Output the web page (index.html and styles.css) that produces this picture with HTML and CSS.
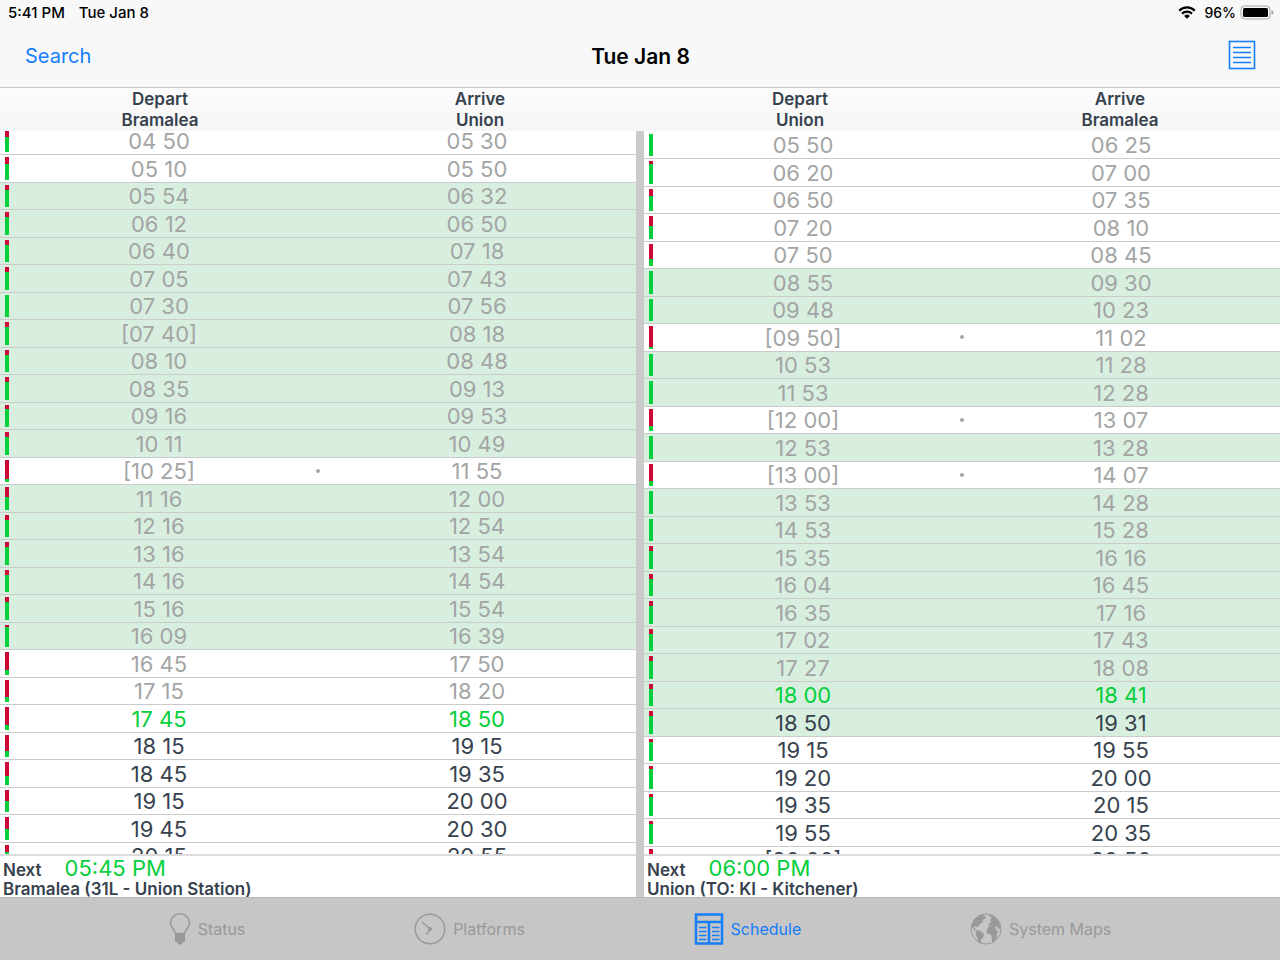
FILE: index.html
```html
<!DOCTYPE html>
<html lang="en">

<head>
  <meta charset="UTF-8">
  <meta name="viewport" content="width=device-width, initial-scale=1.0">
  <title>Schedule</title>
  <link rel="stylesheet" href="styles.css">
</head>

<body>
  <div class="statusBar">
    <span>5:41 PM</span>
    <span>Tue Jan 8</span>
    <div class="statusRight">
      <svg class="wifi" width="18" height="13" viewBox="0 0 18 13">
        <path d="M1.2 4.7a11 11 0 0 1 15.6 0" />
        <path d="M4 7.6a7.1 7.1 0 0 1 10 0" />
        <path class="wifiDot" d="M9 12.8L6.1 9.9a4.1 4.1 0 0 1 5.8 0z" />
      </svg>
      <span class="percent">96%</span>
      <svg class="battery" width="34" height="15" viewBox="0 0 34 15">
        <rect class="batteryCase" x="1" y="1" width="29" height="13" rx="3.5" />
        <rect x="3" y="3" width="25" height="9" rx="1.5" />
        <path class="batteryTip" d="M31.5 5q2 .8 2 2.5t-2 2.5z" />
      </svg>
    </div>
  </div>

  <div class="navBar">
    <a class="searchLink" href="#">Search</a>
    <h1 class="navTitle">Tue Jan 8</h1>
    <button class="listButton" aria-label="List">
      <svg width="28" height="30" viewBox="0 0 28 30">
        <rect x="1.5" y="1.5" width="25" height="27" />
        <path d="M5 7.5h18M5 12.5h18M5 17.5h18M5 22.5h18" />
      </svg>
    </button>
  </div>

  <div class="headings">
    <div>Depart<br>Bramalea</div>
    <div>Arrive<br>Union</div>
    <div>Depart<br>Union</div>
    <div>Arrive<br>Bramalea</div>
  </div>

  <div class="panes">
    <div class="pane">
      <div class="trips scrolled">
        <table aria-label="Bramalea to Union">
          <tbody id="toUnion"></tbody>
        </table>
      </div>
      <div class="next">
        <div class="nextTop"><span class="nextLabel">Next</span><span class="nextTime">05:45 PM</span></div>
        <div class="nextTrip">Bramalea (31L - Union Station)</div>
      </div>
    </div>
    <div class="pane">
      <div class="trips">
        <table aria-label="Union to Bramalea">
          <tbody id="toBramalea"></tbody>
        </table>
      </div>
      <div class="next">
        <div class="nextTop"><span class="nextLabel">Next</span><span class="nextTime">06:00 PM</span></div>
        <div class="nextTrip">Union (TO: KI - Kitchener)</div>
      </div>
    </div>
  </div>

  <nav class="tabBar">
    <a class="tab" href="#">
      <svg width="22" height="32" viewBox="0 0 22 32">
        <path class="line" d="M6.5 20.5C6 16.500 1.500 15.500 1.500 10a9.500 9.200 0 0 1 19 0C20.500 15.500 16 16.500 15.500 20.500z" />
        <path class="solid" d="M6 20.500h10v7.500l-2 1.500-1.500 2h-3l-1.500-2-2-1.500z" />
      </svg>
      Status
    </a>
    <a class="tab" href="#">
      <svg width="32" height="32" viewBox="0 0 32 32">
        <circle class="line" cx="16" cy="16" r="14.800" />
        <circle class="solid" cx="16" cy="16" r="2" />
        <path class="line" d="M16 16L8 9M16 16l-3.500 5.500" />
      </svg>
      Platforms
    </a>
    <a class="tab active" href="#">
      <svg width="30" height="32" viewBox="0 0 30 32">
        <path class="line" d="M2 1.500h26v29H2zM2 9h26M15 9v21" />
        <path class="thin" d="M5 14.500h7.500M5 18.500h7.500M5 22.500h7.500M5 26.500h7.500M18 14.500h7.500M18 18.500h7.500M18 22.500h7.500M18 26.500h7.500" />
      </svg>
      Schedule
    </a>
    <a class="tab" href="#">
      <svg width="32" height="32" viewBox="0 0 32 32">
        <circle class="thin" cx="16" cy="16" r="15" />
        <path class="solid" d="M1.500 13C2.500 8 6 3.500 11 1.800l3 .2-1 2 2-1 1.500 1-2.500 2.500-2 .5 1.500 2-3 1.500-2 3-1.500.5-2-1-1 1.500 1.500 2 2 1.500-1 .5-3-2.500z" />
        <path class="solid" d="M6.500 17.500l3.500 0 4 3.500-1 4-2 1.500-.5 4-2-.8-1-5-2-3.200z" />
        <path class="solid" d="M18 2l4 0 4 3 3 4 1.500 4-1.500 4-1.500-3-2-1-1 2-2.500-2.500-3 .5-.5-2 2.500-2-1-2.500 2-1.500z" />
        <path class="solid" d="M18 14l4-1.500 3.500 2 1 3 2 .5-2 3.500.500 3-3.500 5-1.500-1-.5-5.500-1-2-3 0-1-3z" />
      </svg>
      System Maps
    </a>
  </nav>

  <script>
    // [depart, arrive, red share of the bar in %, type]
    // t = train, b = bus, * = connection
    const toUnion = [
      ['04 50', '05 30', 32, 'b'],
      ['05 10', '05 50', 31, 'b'],
      ['05 54', '06 32', 24, 't'],
      ['06 12', '06 50', 23, 't'],
      ['06 40', '07 18', 24, 't'],
      ['07 05', '07 43', 23, 't'],
      ['07 30', '07 56', 0, 't'],
      ['[07 40]', '08 18', 23, 't'],
      ['08 10', '08 48', 22, 't'],
      ['08 35', '09 13', 22, 't'],
      ['09 16', '09 53', 18, 't'],
      ['10 11', '10 49', 23, 't'],
      ['[10 25]', '11 55', 88, 'b*'],
      ['11 16', '12 00', 45, 't'],
      ['12 16', '12 54', 23, 't'],
      ['13 16', '13 54', 23, 't'],
      ['14 16', '14 54', 23, 't'],
      ['15 16', '15 54', 23, 't'],
      ['16 09', '16 39', 7, 't'],
      ['16 45', '17 50', 77, 'b'],
      ['17 15', '18 20', 77, 'b'],
      ['17 45', '18 50', 77, 'b'],
      ['18 15', '19 15', 73, 'b'],
      ['18 45', '19 35', 60, 'b'],
      ['19 15', '20 00', 50, 'b'],
      ['19 45', '20 30', 50, 'b'],
      ['20 15', '20 55', 33, 'b'],
    ];
    const toBramalea = [
      ['05 50', '06 25', 0, 'b'],
      ['06 20', '07 00', 11, 'b'],
      ['06 50', '07 35', 33, 'b'],
      ['07 20', '08 10', 45, 'b'],
      ['07 50', '08 45', 68, 'b'],
      ['08 55', '09 30', 0, 't'],
      ['09 48', '10 23', 0, 't'],
      ['[09 50]', '11 02', 90, 'b*'],
      ['10 53', '11 28', 0, 't'],
      ['11 53', '12 28', 0, 't'],
      ['[12 00]', '13 07', 78, 'b*'],
      ['12 53', '13 28', 0, 't'],
      ['[13 00]', '14 07', 78, 'b*'],
      ['13 53', '14 28', 0, 't'],
      ['14 53', '15 28', 0, 't'],
      ['15 35', '16 16', 23, 't'],
      ['16 04', '16 45', 23, 't'],
      ['16 35', '17 16', 23, 't'],
      ['17 02', '17 43', 23, 't'],
      ['17 27', '18 08', 23, 't'],
      ['18 00', '18 41', 23, 't'],
      ['18 50', '19 31', 23, 't'],
      ['19 15', '19 55', 12, 'b'],
      ['19 20', '20 00', 12, 'b'],
      ['19 35', '20 15', 12, 'b'],
      ['19 55', '20 35', 12, 'b'],
      ['[20 00]', '20 50', 77, 'b*'],
    ];

    function showTrips(id, trips, next) {
      let html = '';
      trips.forEach(([depart, arrive, red, type], i) => {
        let rowClass = i < next ? 'past' : i === next ? 'current' : '';
        if (type.includes('t')) rowClass += ' train';
        const dot = type.includes('*') ? '<i class="dot"></i>' : '';
        html += `<tr class="${rowClass}">
          <td><i class="bar" style="--red: ${red}%"></i>${depart}</td>
          <td>${dot}${arrive}</td>
        </tr>`;
      });
      document.getElementById(id).innerHTML = html;
    }

    showTrips('toUnion', toUnion, 21);
    showTrips('toBramalea', toBramalea, 20);
  </script>
</body>

</html>
```
FILE: styles.css
```css
* {
  box-sizing: border-box;
}

body {
  margin: 0;
  height: 100vh;
  display: flex;
  flex-direction: column;
  overflow: hidden;
  background-color: #f8f8f8;
  color: #36424e;
  font-family: Inter, "Liberation Sans", sans-serif;
}

a {
  text-decoration: none;
}

/* status bar */
.statusBar {
  display: flex;
  align-items: center;
  gap: 14px;
  height: 25px;
  padding: 0 6px 0 8px;
  color: black;
  font-size: 15px;
  font-weight: 500;
}

.statusRight {
  display: flex;
  align-items: center;
  gap: 4px;
  margin-left: auto;
}

.percent {
  font-size: 14px;
}

.wifi {
  margin-right: 4px;
  fill: none;
  stroke: black;
  stroke-width: 2.2;
}

.wifiDot {
  fill: black;
  stroke: none;
}

.batteryCase {
  fill: none;
  stroke: #a5a5a5;
}

.batteryTip {
  fill: #a5a5a5;
}

/* navigation bar */
.navBar {
  display: grid;
  grid-template-columns: 1fr auto 1fr;
  align-items: center;
  height: 63px;
  padding: 0 24px 0 25px;
  border-bottom: 1px solid #c8c8c8;
}

.searchLink {
  color: #147efb;
  font-size: 20px;
}

.navTitle {
  margin: 0;
  color: black;
  font-size: 21px;
  font-weight: 600;
}

.listButton {
  justify-self: end;
  display: flex;
  padding: 0 0 2px;
  border: 0;
  background: none;
  cursor: pointer;
}

.listButton svg {
  fill: none;
  stroke: #147efb;
  stroke-width: 1.6;
}

.headings {
  display: grid;
  grid-template-columns: repeat(4, 1fr);
  height: 43px;
  padding-top: 1px;
  background: linear-gradient(#fcfcfc, #f6f6f6);
  font-size: 17px;
  font-weight: 600;
  line-height: 21px;
  text-align: center;
}

/* schedule */
.panes {
  flex: 1;
  min-height: 0;
  display: grid;
  grid-template-columns: 1fr 1fr;
  gap: 8px;
  background-color: #cacaca;
}

.pane {
  display: flex;
  flex-direction: column;
  min-height: 0;
  background-color: white;
}

.trips {
  flex: 1;
  min-height: 0;
  overflow: hidden;
}

.scrolled table {
  margin-top: -4px;
}

table {
  width: 100%;
  table-layout: fixed;
  border-spacing: 0;
}

td {
  position: relative;
  height: 27px;
  padding: 0;
  border-top: 1px solid #cbcbcb;
  font-size: 22px;
  line-height: 26px;
  text-align: center;
}

tr:nth-child(even) td {
  height: 28px;
}

tr:first-child td {
  border-color: transparent;
}

.train {
  background-color: #d8efdf;
}

.past {
  color: #a3a5a5;
}

.current {
  color: #05cf3b;
}

.bar {
  position: absolute;
  top: 2px;
  bottom: 2px;
  left: 5px;
  width: 4px;
  background: linear-gradient(#cc0635 var(--red), #05cf3b var(--red));
}

.dot {
  position: absolute;
  top: 11px;
  left: -2px;
  width: 4px;
  height: 4px;
  border-radius: 50%;
  background-color: #a3a5a5;
}

.next {
  height: 43px;
  padding-left: 3px;
  border-top: 2px solid #dcdcdc;
  font-size: 17px;
  font-weight: 600;
}

.nextTop {
  display: flex;
  align-items: baseline;
  gap: 23px;
  line-height: 24px;
}

.nextTime {
  color: #05cf3b;
  font-size: 22px;
  font-weight: 400;
}

.nextTrip {
  line-height: 14px;
}

/* tab bar */
.tabBar {
  display: flex;
  justify-content: space-evenly;
  height: 63px;
  border-top: 1px solid #b8b8b8;
  background-color: #c6c6c6;
}

.tab {
  display: flex;
  align-items: center;
  gap: 7px;
  color: #999;
  font-size: 16px;
}

.active {
  color: #147efb;
}

.line,
.thin {
  fill: none;
  stroke: currentColor;
  stroke-width: 1.5;
}

.thin {
  stroke-width: 1;
}

.active .line {
  stroke-width: 2.5;
}

.active .thin {
  stroke-width: 1.3;
}

.solid {
  fill: currentColor;
}
```
